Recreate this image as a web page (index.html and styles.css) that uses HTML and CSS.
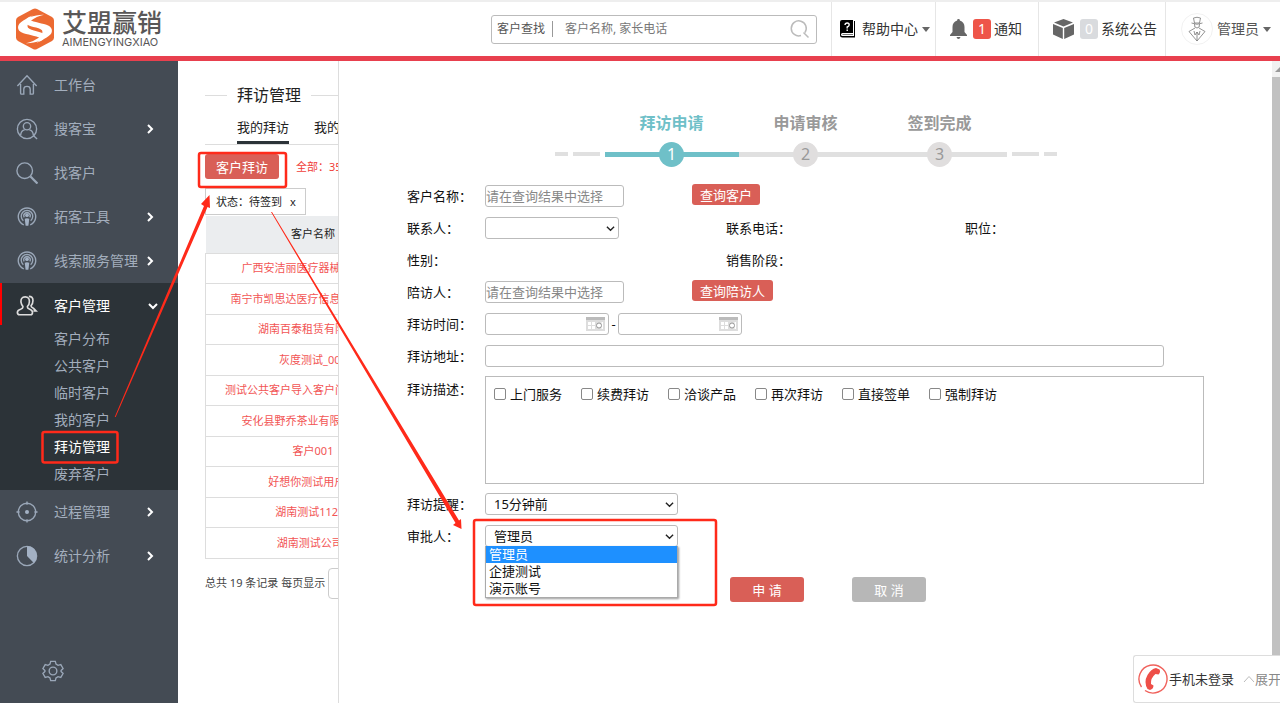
FILE: index.html
```html
<!DOCTYPE html>
<html lang="zh-CN">
<head>
<meta charset="utf-8">
<title>拜访管理</title>
<link rel="stylesheet" href="styles.css">
</head>
<body>
<div class="app">
  <header class="topbar">
    <a class="logo" href="#">
      <svg class="logo-mark" viewBox="0 0 114 124" aria-hidden="true">
        <path fill="#ec6a32" d="M51 2Q57-1 63 2L108 26Q114 30 114 36V88Q114 94 108 98L63 122Q57 125 51 122L6 98Q0 94 0 88V36Q0 30 6 26Z"/>
        <path id="lobe" fill="#fff" d="M84 19C58 18 24 30 10 46C3 56 6 66 16 72C32 80 62 82 72 90C76 95 70 99 62 103C78 98 90 90 86 80C80 68 44 68 36 58C28 44 54 26 84 19Z"/>
        <use href="#lobe" transform="rotate(180 57 62)"/>
      </svg>
      <span class="logo-text"><span class="logo-cn">艾盟赢销</span><span class="logo-en">AIMENGYINGXIAO</span></span>
    </a>
    <form class="search">
      <label class="search-label" for="q">客户查找</label>
      <input class="search-input" id="q" type="text" placeholder="客户名称, 家长电话">
      <button class="search-button" type="button" aria-label="搜索">
        <svg width="20" height="20" viewBox="0 0 20 20" fill="none" stroke="#bbb" stroke-width="1.5"><path d="M11 16.5A7.5 7.5 0 1 1 15 13.5M13.5 13.5L18.5 18.5"/></svg>
      </button>
    </form>
    <nav class="top-links">
      <a class="top-cell cell-help" href="#">
        <svg width="16" height="18" viewBox="0 0 16 18"><path d="M2 0H13V13H2.500a1 1 0 0 0 0 3H14V1h1V17.500H2.500A2.500 2.500 0 0 1 0 15V2A2 2 0 0 1 2 0Z"/><path d="M2.500 14.500H13" stroke="#777"/><path d="M5 5Q5.200 3 7.200 3T9.200 5Q9 6.200 7.200 7V8.500M7.200 9.500V11" fill="none" stroke="#fff" stroke-width="1.400"/></svg>
        <span>帮助中心</span><i class="caret"></i>
      </a>
      <a class="top-cell cell-notice" href="#">
        <svg width="17" height="20" viewBox="0 0 17 20" fill="#666"><path d="M8.500 0a1.300 1.300 0 0 1 1.300 1.500C13 2.300 14.500 5 14.500 8V13L17 16V17H0V16L2.500 13V8C2.500 5 4 2.300 7.200 1.500A1.300 1.300 0 0 1 8.500 0ZM6.500 18H10.500Q10 20 8.500 20T6.500 18Z"/></svg>
        <span class="badge badge-red">1</span><span>通知</span>
      </a>
      <a class="top-cell cell-board" href="#">
        <svg width="21" height="20" viewBox="0 0 21 20" fill="#666"><path d="M10.500 0L20 3.500L10.500 7.500L1 3.500ZM0 5L9.800 9V20L0 15.500ZM21 5L11.200 9V20L21 15.500Z"/></svg>
        <span class="badge badge-gray">0</span><span>系统公告</span>
      </a>
      <a class="top-cell cell-user" href="#">
        <svg width="32" height="32" viewBox="0 0 32 32" fill="none" stroke="#777" stroke-width=".8"><circle cx="16" cy="16" r="15.500" stroke="#eee"/><path d="M12.500 5Q16 3.500 19.500 5L18.500 10H13.500ZM10.500 10Q16 12.500 21.500 10M13.500 11Q13 15 16 15T18.500 11M14 15L8 18.500L16 28L24 18.500L18 15M13 18L14 22L16 19L18 22L19 18M16 19V28"/></svg>
        <span>管理员</span><i class="caret"></i>
      </a>
    </nav>
  </header>

  <div class="body">
    <aside class="sidebar">
      <a class="nav-item" href="#">
        <svg class="nav-icon" viewBox="0 0 24 24"><path d="M1.500 13L12 2L22.500 13M5 11V21Q5 22 6 22H8.500V16.500Q8.500 13.500 12 13.500T15.500 16.500V22H18Q19 22 19 21V11"/></svg>
        <span>工作台</span></a>
      <a class="nav-item" href="#">
        <svg class="nav-icon" viewBox="0 0 24 24" stroke-width="2"><circle cx="12" cy="12" r="10.500"/><circle cx="12" cy="9" r="4"/><path d="M5 19Q5.500 13.500 9.500 13M14.500 13Q18.500 13.500 19 19M19 19L23 23"/></svg>
        <span>搜客宝</span><svg class="chev" viewBox="0 0 10 10"><path d="M3 1L7 5L3 9"/></svg></a>
      <a class="nav-item" href="#">
        <svg class="nav-icon" viewBox="0 0 24 24"><circle cx="9.500" cy="9.500" r="8.500"/><path stroke-width="2.500" d="M15.800 15.800L23.500 23.500"/></svg>
        <span>找客户</span></a>
      <a class="nav-item" href="#">
        <svg class="nav-icon" viewBox="0 0 24 24"><path d="M8.500 20.500A9.500 9.500 0 1 1 15.500 20.500M8 16A6.300 6.300 0 1 1 16 16M9 12.500A3.500 3.500 0 1 1 15 12.500"/><circle class="solid" cx="12" cy="10" r="2"/><path class="solid" d="M9.500 14Q12 12.500 14.500 14L13.500 21.500H10.500Z"/></svg>
        <span>拓客工具</span><svg class="chev" viewBox="0 0 10 10"><path d="M3 1L7 5L3 9"/></svg></a>
      <a class="nav-item" href="#">
        <svg class="nav-icon" viewBox="0 0 24 24"><path d="M8.500 20.500A9.500 9.500 0 1 1 15.500 20.500M8 16A6.300 6.300 0 1 1 16 16M9 12.500A3.500 3.500 0 1 1 15 12.500"/><circle class="solid" cx="12" cy="10" r="2"/><path class="solid" d="M9.500 14Q12 12.500 14.500 14L13.500 21.500H10.500Z"/></svg>
        <span>线索服务管理</span><svg class="chev" viewBox="0 0 10 10"><path d="M3 1L7 5L3 9"/></svg></a>
      <div class="nav-group">
        <a class="nav-item nav-open" href="#">
          <svg class="nav-icon" viewBox="0 0 24 24"><path stroke-width="1.800" d="M10 2C6.500 2 5 4.500 5.500 8Q6 11 7.500 12.500Q8 14.500 5 15.500Q1.500 16.500 1.500 19Q1.500 21.500 4 21.500H16Q18 21.500 18 19Q18 16.500 15 15.500Q12 14.500 12.500 12.500Q14.500 11 14.500 8C15 4.500 13.500 2 10 2ZM14 1.500Q18.500 1.500 18.500 6Q18.500 9.500 16.500 11.500Q16 13 19 14.500L22 17.500H19"/></svg>
          <span>客户管理</span><svg class="chev" viewBox="0 0 10 10"><path d="M1 3L5 7L9 3"/></svg></a>
        <ul class="subnav">
          <li><a href="#">客户分布</a></li>
          <li><a href="#">公共客户</a></li>
          <li><a href="#">临时客户</a></li>
          <li><a href="#">我的客户</a></li>
          <li><a class="current" href="#">拜访管理</a></li>
          <li><a href="#">废弃客户</a></li>
        </ul>
      </div>
      <a class="nav-item" href="#">
        <svg class="nav-icon" viewBox="0 0 24 24"><circle cx="12" cy="12" r="9.500"/><circle class="solid" cx="12" cy="12" r="2.200"/><path d="M12 .500V4M12 20V23.500M.500 12H4M20 12H23.500"/></svg>
        <span>过程管理</span><svg class="chev" viewBox="0 0 10 10"><path d="M3 1L7 5L3 9"/></svg></a>
      <a class="nav-item" href="#">
        <svg class="nav-icon" viewBox="0 0 24 24"><circle cx="12" cy="12" r="10.500"/><path class="solid" d="M12 1.500A10.500 10.500 0 0 1 19.500 19.500L12 12Z"/></svg>
        <span>统计分析</span><svg class="chev" viewBox="0 0 10 10"><path d="M3 1L7 5L3 9"/></svg></a>
      <button class="settings" type="button" aria-label="设置">
        <svg class="nav-icon" viewBox="0 0 24 24"><circle cx="12" cy="12" r="4.200"/><path d="M9.500 1.500H14.500L15.300 4.500L17.500 5.800L20.500 5L23 9.300L20.800 11.500V12.500L23 14.700L20.500 19L17.500 18.200L15.300 19.500L14.500 22.500H9.500L8.700 19.500L6.500 18.200L3.500 19L1 14.700L3.200 12.500V11.500L1 9.300L3.500 5L6.500 5.800L8.700 4.500Z"/></svg>
      </button>
    </aside>

    <section class="list">
      <h1 class="list-title">拜访管理</h1>
      <div class="tabs"><a class="tab tab-on" href="#">我的拜访</a><a class="tab" href="#">我的下属拜访</a></div>
      <div class="list-tools"><button class="btn btn-visit" type="button">客户拜访</button><span class="total">全部：35</span></div>
      <div class="filter"><span>状态：待签到</span><button class="filter-x" type="button">x</button></div>
      <table class="grid">
        <thead><tr><th>客户名称</th></tr></thead>
        <tbody>
          <tr><td>广西安洁丽医疗器械有限公司</td></tr>
          <tr><td>南宁市凯思达医疗信息科技分公司</td></tr>
          <tr><td>湖南百泰租赁有限公司</td></tr>
          <tr><td>灰度测试_001</td></tr>
          <tr><td>测试公共客户导入客户问题测试数据</td></tr>
          <tr><td>安化县野乔茶业有限责任公司</td></tr>
          <tr><td>客户001</td></tr>
          <tr><td>好想你测试用户12</td></tr>
          <tr><td>湖南测试11234</td></tr>
          <tr><td>湖南测试公司1</td></tr>
        </tbody>
      </table>
      <div class="pager"><label for="size">总共 19 条记录 每页显示</label><input id="size" class="pager-size" type="text"></div>
    </section>

    <main class="drawer">
      <div class="steps">
        <span class="dash dash-s"></span><span class="dash dash-l"></span>
        <div class="step step-on"><span class="step-name">拜访申请</span><span class="step-dot">1</span></div>
        <div class="step"><span class="step-name">申请审核</span><span class="step-dot">2</span></div>
        <div class="step"><span class="step-name">签到完成</span><span class="step-dot">3</span></div>
        <span class="dash dash-l"></span><span class="dash dash-s"></span>
      </div>
      <form class="form">
        <div class="row"><label class="label" for="cust">客户名称：</label>
          <span class="slot"><input id="cust" class="field field-pick" type="text" placeholder="请在查询结果中选择"></span>
          <button class="btn btn-query" type="button">查询客户</button></div>
        <div class="row"><label class="label" for="contact">联系人：</label>
          <span class="slot slot-wide"><span class="select select-contact"><select id="contact" class="field"><option></option></select><svg class="arrow" viewBox="0 0 10 10"><path d="M1 3L5 7L9 3"/></svg></span></span>
          <span class="slot slot-mid">联系电话：</span><span>职位：</span></div>
        <div class="row"><span class="label">性别：</span><span class="slot slot-wide"></span><span>销售阶段：</span></div>
        <div class="row"><label class="label" for="mate">陪访人：</label>
          <span class="slot"><input id="mate" class="field field-pick" type="text" placeholder="请在查询结果中选择"></span>
          <button class="btn btn-query" type="button">查询陪访人</button></div>
        <div class="row"><label class="label" for="from">拜访时间：</label>
          <span class="date"><input id="from" class="field" type="text"><svg class="cal" viewBox="0 0 19 14"><path fill="#ddd" d="M0 0H19V14H0Z"/><path fill="#bbb" d="M0 0H19V3H0Z"/><path fill="#fff" d="M2 5H5V8H2ZM6 5H9V8H6ZM2 9H5V12H2ZM6 9H9V12H6ZM15.500 5H17V12H15.500Z"/><circle cx="13" cy="8.500" r="2.500" fill="#fff" stroke="#999"/></svg></span>
          <span class="to">-</span>
          <span class="date"><input class="field" type="text" aria-label="结束时间"><svg class="cal" viewBox="0 0 19 14"><path fill="#ddd" d="M0 0H19V14H0Z"/><path fill="#bbb" d="M0 0H19V3H0Z"/><path fill="#fff" d="M2 5H5V8H2ZM6 5H9V8H6ZM2 9H5V12H2ZM6 9H9V12H6ZM15.500 5H17V12H15.500Z"/><circle cx="13" cy="8.500" r="2.500" fill="#fff" stroke="#999"/></svg></span></div>
        <div class="row"><label class="label" for="addr">拜访地址：</label><input id="addr" class="field field-addr" type="text"></div>
        <div class="row row-desc"><span class="label">拜访描述：</span>
          <div class="desc">
            <label class="check"><input type="checkbox">上门服务</label>
            <label class="check"><input type="checkbox">续费拜访</label>
            <label class="check"><input type="checkbox">洽谈产品</label>
            <label class="check"><input type="checkbox">再次拜访</label>
            <label class="check"><input type="checkbox">直接签单</label>
            <label class="check"><input type="checkbox">强制拜访</label>
          </div></div>
        <div class="row"><label class="label" for="remind">拜访提醒：</label>
          <span class="select select-long"><select id="remind" class="field"><option>15分钟前</option></select><svg class="arrow" viewBox="0 0 10 10"><path d="M1 3L5 7L9 3"/></svg></span></div>
        <div class="row"><label class="label" for="approver">审批人：</label>
          <span class="select select-long"><select id="approver" class="field"><option>管理员</option><option>企捷测试</option><option>演示账号</option></select><svg class="arrow" viewBox="0 0 10 10"><path d="M1 3L5 7L9 3"/></svg>
            <span class="options" role="listbox"><span class="option option-on" role="option" aria-selected="true">管理员</span><span class="option" role="option">企捷测试</span><span class="option" role="option">演示账号</span></span></span></div>
        <div class="actions"><button class="btn btn-act" type="button">申 请</button><button class="btn btn-act btn-cancel" type="button">取 消</button></div>
      </form>
    </main>
    <div class="scroll"><span class="scroll-up"></span><span class="scroll-thumb"></span></div>
  </div>

  <div class="phone">
    <svg width="30" height="30" viewBox="0 0 30 30"><path fill="none" stroke="#f0625c" stroke-width="1.400" d="M3.500 23A14 14 0 1 1 7 26.500"/><path fill="#ee4f48" d="M18 4L21.500 5.500Q23 8 20.500 10.500L17.500 10Q12.500 14 13 20L15.500 21.500Q15.500 25 12 26L9.500 25Q5.500 18 9.500 11Q13 5 18 4Z"/></svg>
    <span class="phone-state">手机未登录</span>
    <svg width="12" height="8" viewBox="0 0 12 8" fill="none" stroke="#bbb"><path d="M1 7L6 1.500L11 7"/></svg>
    <button class="phone-open" type="button">展开</button>
  </div>

  <svg class="marks" width="1280" height="703" viewBox="0 0 1280 703" aria-hidden="true">
    <g fill="none" stroke="#ff2a1a" stroke-width="2.500">
      <rect x="42.500" y="432" width="75" height="30.500" rx="2"/>
      <rect x="199" y="153" width="87" height="34" rx="2"/>
      <rect x="474" y="520" width="242" height="85" rx="2"/>
    </g>
    <g fill="#ff2a1a">
      <path d="M114.700 417L204 206L201 204L209.500 195L210 208L207.500 207L115.700 417Z"/>
      <path d="M271 212L455.500 523L453 525L461.500 529L461 519L459 520.500L272 212Z"/>
    </g>
  </svg>
</div>
</body>
</html>
```
FILE: styles.css
```css
* { box-sizing: border-box; }
body { margin: 0; font-family: "Noto Sans", "Noto Sans CJK SC", sans-serif; font-size: 13px; line-height: 20px; color: #222; background: #fff; }
a { color: inherit; text-decoration: none; }
button, input, select { font: inherit; color: inherit; margin: 0; }
button { border: 0; background: none; padding: 0; cursor: pointer; white-space: nowrap; }
.app { position: relative; min-height: 100vh; display: flex; flex-direction: column; overflow: hidden; }

.topbar { display: flex; align-items: center; height: 61px; border-top: 2px solid #eee; border-bottom: 5px solid #e8404e; }
.logo { display: flex; align-items: center; gap: 8px; margin-left: 16px; color: #595757; }
.logo-mark { width: 38px; height: 42px; }
.logo-text { display: flex; flex-direction: column; }
.logo-cn { font-size: 25px; line-height: 25px; font-weight: 500; }
.logo-en { font-family: Inter, sans-serif; font-size: 11px; line-height: 14px; }
.search { display: flex; align-items: center; width: 326px; height: 29px; margin-left: auto; margin-right: 14px; padding: 0 6px 0 5px; border: 1px solid #bbb; border-radius: 3px; font-size: 12px; }
.search-label { line-height: 16px; padding-right: 7px; border-right: 1px solid #999; color: #555; }
.search-input { flex: 1; min-width: 0; padding: 0 0 0 12px; border: 0; outline: 0; }
.search-input::placeholder { color: #777; }
.search-button { display: flex; }
.top-links { display: flex; align-self: stretch; font-size: 14px; color: #333; }
.top-cell { display: flex; align-items: center; border-left: 1px solid #e6e6e6; white-space: nowrap; }
.caret { border: 4px solid transparent; border-top: 5px solid #666; border-bottom: 0; margin-left: 4px; }
.cell-help { width: 104px; padding-left: 8px; }
.cell-help span { margin-left: 6px; }
.cell-notice { width: 103px; padding-left: 14px; }
.cell-board { width: 127px; padding-left: 14px; }
.cell-user { width: 115px; padding-left: 15px; color: #555; }
.cell-user span { margin-left: 4px; }
.badge { width: 18px; height: 20px; margin: 0 3px 0 6px; border-radius: 3px; text-align: center; color: #fff; }
.badge-red { background: #ee5549; }
.badge-gray { background: #d9dbde; }

.body { flex: 1; display: flex; align-items: stretch; }
.sidebar { flex: 0 0 178px; display: flex; flex-direction: column; padding-top: 2px; background: #444b54; color: #a3aebd; font-size: 14px; }
.nav-item { display: flex; align-items: center; height: 44px; padding: 0 22px 0 16px; }
.nav-item span { flex: 1; margin-left: 16px; white-space: nowrap; }
.nav-icon { width: 22px; height: 22px; fill: none; stroke: #9aa7b8; stroke-width: 1.500; flex: none; }
.nav-icon .solid { fill: #a3b1c4; stroke: none; }
.chev { width: 10px; height: 10px; fill: none; stroke: #fff; stroke-width: 2; flex: none; margin-right: 1px; }
.nav-group { padding-bottom: 3px; background: #2c3338; }
.nav-open { height: 42px; padding: 4px 19px 0 14px; border-left: 2px solid #f00; color: #fff; }
.nav-open .nav-icon { stroke: #ddd; }
.subnav { list-style: none; margin: 0; padding: 0 0 0 54px; line-height: 27px; }
.current { color: #fff; }
.settings { align-self: flex-start; margin: auto 0 21px 42px; display: flex; }

.list { flex: 0 0 161px; overflow: hidden; padding: 23px 0 0 27px; border-right: 1px solid #ddd; font-size: 11px; white-space: nowrap; }
.list-title { display: flex; align-items: center; gap: 10px; margin: 0; font-size: 16px; line-height: 22px; font-weight: 400; }
.list-title::before, .list-title::after { content: ""; width: 22px; border-top: 1px solid #ddd; }
.list-title::after { flex: 1; }
.tabs { display: flex; gap: 25px; height: 39px; padding: 11px 0 0 32px; border-bottom: 1px solid #ddd; font-size: 13px; overflow: hidden; }
.tab { height: 27px; flex: none; }
.tab-on { border-bottom: 3px solid #2c3338; }
.list-tools { display: flex; align-items: center; gap: 17px; padding-top: 9px; color: #f0403a; }
.btn { background: #d95f57; color: #fff; border-radius: 3px; text-align: center; font-size: 13px; }
.btn-visit { width: 74px; height: 25px; flex: none; }
.filter { display: inline-flex; align-items: center; gap: 8px; width: 101px; height: 27px; margin-top: 9px; padding-left: 10px; border: 1px solid #ccc; }
.grid { width: 216px; margin-top: 1px; border-collapse: collapse; text-align: center; table-layout: fixed; }
.grid th { height: 37px; background: #ebedef; font-weight: 400; padding: 0; }
.grid td { height: 30px; padding: 0; border: 1px solid #ddd; color: #f25555; }
.grid tr:nth-child(even) td { height: 31px; }
.pager { display: flex; align-items: center; gap: 3px; margin-top: 9px; color: #444; }
.pager-size { width: 60px; height: 31px; flex: none; border: 1px solid #ccc; border-radius: 4px; }

.drawer { flex: 1; min-width: 0; padding-top: 52px; color: #111; }
.steps { display: flex; justify-content: center; align-items: flex-end; gap: 5px; height: 55px; }
.step { display: flex; flex-direction: column; align-items: center; width: 134px; color: #999; background: linear-gradient(#e0e0e0, #e0e0e0) 0 39px / 100% 5px no-repeat; height: 55px; }
.step + .step { margin-left: -5px; }
.step-name { font-size: 16px; line-height: 20px; font-weight: 700; margin-bottom: 9px; }
.step-dot { width: 25px; height: 25px; border-radius: 50%; line-height: 25px; text-align: center; font-size: 16px; background: #e0dede; }
.step-on { color: #6fc0c8; background-image: linear-gradient(#6fc0c8, #6fc0c8); }
.step-on .step-dot { background: #6fc0c8; color: #fff; }
.dash { height: 4px; margin-bottom: 12px; background: #e0e0e0; }
.dash-s { width: 13px; }
.dash-l { width: 27px; }

.form { padding: 12px 68px 0 68px; }
.row { display: flex; align-items: center; height: 32px; }
.label { flex: 0 0 78px; white-space: nowrap; }
.slot { flex: 0 0 207px; display: flex; }
.slot-wide { flex-basis: 241px; }
.slot-mid { flex-basis: 239px; }
.field { height: 22px; padding: 0; border: 1px solid #bbb; border-radius: 3px; background: #fff; outline: 0; }
.field::placeholder { color: #888; }
.field-pick { width: 139px; }
.field-addr { flex: 1; margin-right: 40px; }
.btn-query { height: 21px; padding: 0 8px; margin-bottom: 3px; }
.select { position: relative; display: grid; align-items: center; }
.select .field { grid-area: 1 / 1; width: 100%; appearance: none; padding-left: 8px; line-height: 20px; }
.arrow { grid-area: 1 / 1; justify-self: end; width: 9px; height: 9px; margin-right: 4px; fill: none; stroke: #222; stroke-width: 1.500; pointer-events: none; }
.select-contact { width: 134px; }
.select-long { width: 193px; }
.options { position: absolute; z-index: 2; top: 21px; left: 0; right: 0; border: 1px solid #aaa; border-top: 0; background: #fff; box-shadow: 1px 1px 2px #999; }
.option { display: block; padding-left: 3px; line-height: 17px; }
.option-on { background: #1e90ff; color: #fff; }
.date { display: grid; align-items: center; width: 124px; }
.date .field { grid-area: 1 / 1; width: 100%; }
.cal { grid-area: 1 / 1; justify-self: end; width: 19px; height: 14px; margin-right: 4px; pointer-events: none; }
.to { width: 9px; text-align: center; }
.row-desc { align-items: flex-start; height: 116px; padding-top: 4px; }
.row-desc .label { line-height: 26px; }
.desc { flex: 1; display: flex; flex-wrap: wrap; align-content: flex-start; gap: 19px; height: 108px; padding: 7px 8px; border: 1px solid #bbb; }
.check { display: flex; align-items: center; gap: 4px; white-space: nowrap; }
.check input { appearance: none; width: 12px; height: 12px; border: 1px solid #888; border-radius: 2px; background: #fff; }
.actions { display: flex; gap: 48px; padding: 25px 0 0 323px; }
.btn-act { width: 74px; height: 25px; }
.btn-cancel { background: #b7b7b7; }

.scroll { flex: 0 0 8px; display: flex; flex-direction: column; background: #f1f1f1; overflow: hidden; }
.scroll-up { height: 16px; }
.scroll-up::before { content: ""; display: block; margin: 6px 0 0 3px; border: 5px solid transparent; border-top: 0; border-bottom: 5px solid #999; width: 0; }
.scroll-thumb { flex: 1; background: #c1c1c1; }

.phone { position: absolute; right: 0; bottom: 0; z-index: 3; width: 147px; height: 48px; display: flex; align-items: center; padding-left: 4px; overflow: hidden; border: 1px solid #ddd; border-right: 0; border-radius: 3px 0 0 3px; background: #fff; white-space: nowrap; }
.phone svg { flex: none; }
.phone-state { margin: 0 9px 0 1px; color: #333; }
.phone-open { color: #888; }
.marks { position: absolute; top: 0; left: 0; z-index: 4; pointer-events: none; }
```
